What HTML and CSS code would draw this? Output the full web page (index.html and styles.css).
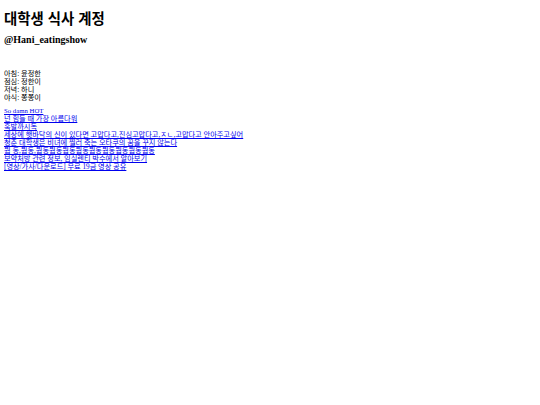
FILE: index.html
```html
<!DOCTYPE html>
<html lang="ko">
<head>
<meta charset="utf-8">
<title>대학생 식사 계정</title>
<link rel="stylesheet" href="styles.css">
</head>
<body>
<h1 class="title">대학생 식사 계정</h1>
<h2 class="handle">@Hani_eatingshow</h2>
<p class="meals">아침: 윤정한<br>점심: 정한이<br>저녁: 하니<br>야식: 쫑쫑이</p>
<p class="links">
<a href="#" class="latin">So damn HOT</a><br>
<a href="#">넌 힘들 때 가장 아름다워</a><br>
<a href="#">훅발까시독</a><br>
<a href="#">세상에 햇바닥의 신이 있다면 고맙다고,진심고맙다고,ㅈㄴ,고맙다고 안아주고싶어</a><br>
<a href="#">청춘 대학생은 비녀에 찔러 죽는 오타쿠의 꿈을 꾸지 않는다</a><br>
<a href="#">뭡 동,뭡동,뭡동뭡동뭡동뭡동뭡동뭡동뭡동뭡동뭡동</a><br>
<a href="#">보약처방 관련 정보, 임실렌티 박수에서 알아보기</a><br>
<a href="#">[영상/가사/다운로드] 무료 19금 영상 공유</a>
</p>
</body>
</html>
```

FILE: styles.css
```css
body {
  margin: 4px;
  font-family: "Liberation Serif", "Noto Sans CJK KR", serif;
  font-size: 7.2px;
  line-height: 8px;
  color: #000;
  background: #fff;
}
.title {
  font-family: "Liberation Sans", "Noto Sans CJK KR", sans-serif;
  font-size: 14.4px;
  line-height: 16px;
  margin: 7px 0 7px;
}
.handle {
  font-size: 10px;
  line-height: 12px;
  margin: 0 0 24px;
}
.meals {
  margin: 0 0 5px;
}
.links {
  margin: 0;
}
.links a {
  color: #00e;
}
.latin {
  font-size: 6.75px;
}
```
